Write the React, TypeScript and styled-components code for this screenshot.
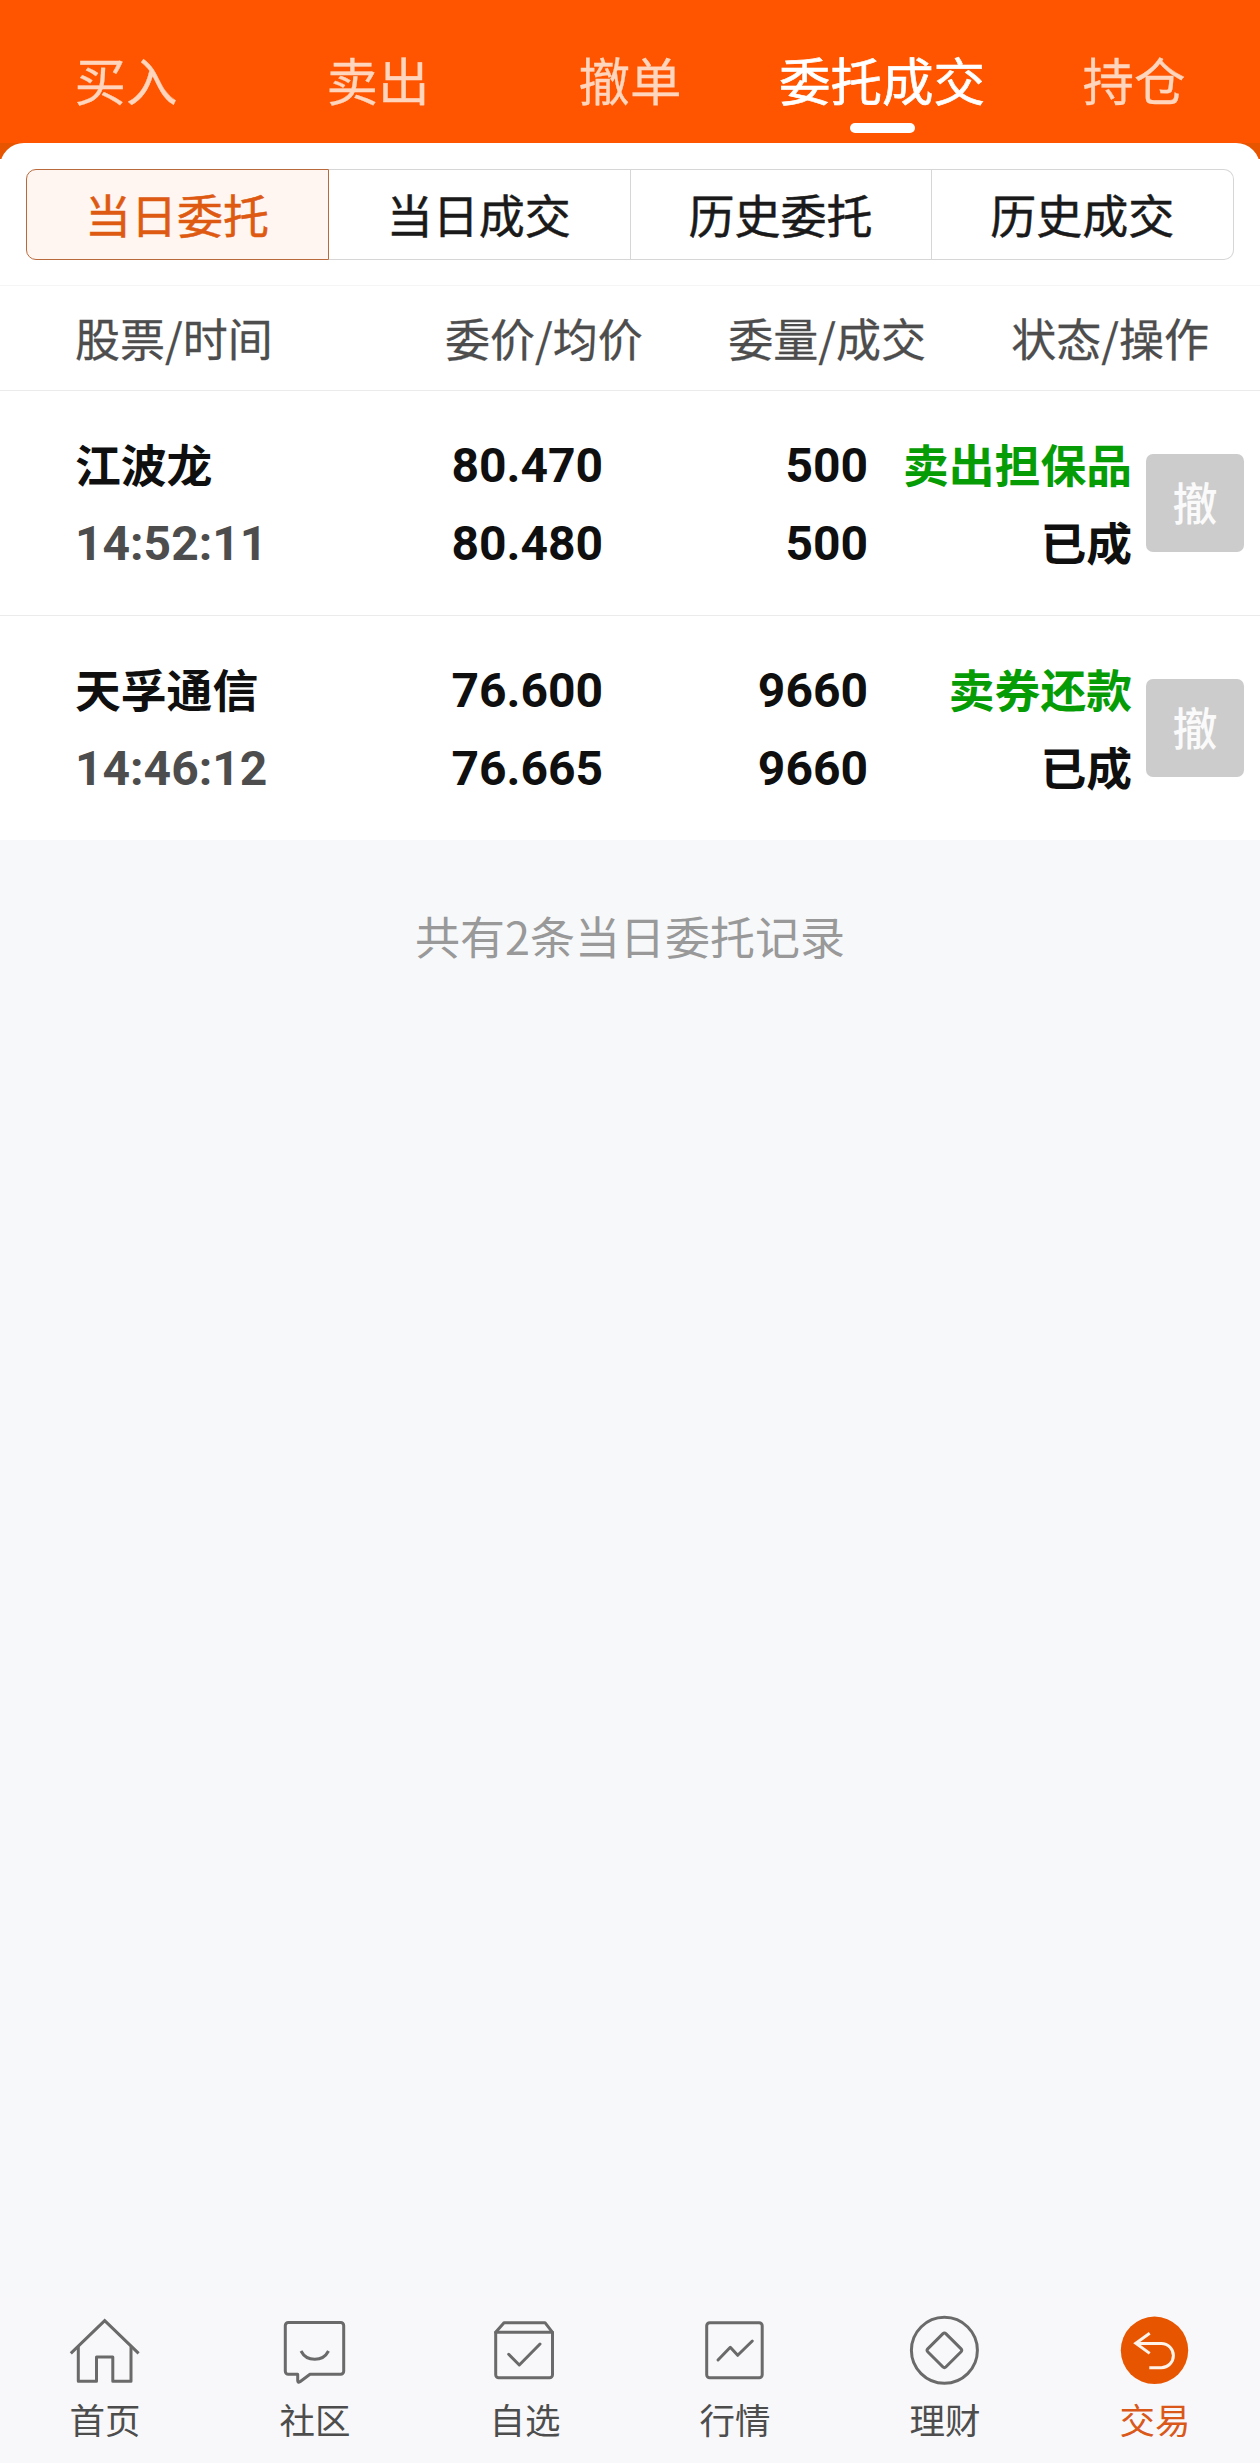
import React from 'react';
import styled, { createGlobalStyle } from 'styled-components';

const GlobalStyle = createGlobalStyle`
  * { box-sizing: border-box; }
  body {
    margin: 0;
    background: #f7f8fa;
    font-family: 'Noto Sans CJK SC', 'Noto Sans', sans-serif;
  }
`;

const Screen = styled.div`
  display: flex;
  flex-direction: column;
  width: 1260px;
  height: 2463px;
  background: #f7f8fa;
`;

const Header = styled.header`
  display: flex;
  height: 143px;
  background: #ff5500;
`;

const HeaderTab = styled.div<{ $active?: boolean }>`
  display: flex;
  flex-direction: column;
  align-items: center;
  width: 252px;
  padding-top: 41px;
  font-size: 51.5px;
  line-height: 76px;
  white-space: nowrap;
  color: ${(p) => (p.$active ? '#fff' : '#ffd6bd')};
  -webkit-text-stroke: ${(p) => (p.$active ? '0.7px' : '0.3px')} currentColor;
`;

const Indicator = styled.span`
  width: 65px;
  height: 10px;
  margin-top: 6px;
  border-radius: 5px;
  background: #fff;
`;

const PanelBackdrop = styled.div`
  background: linear-gradient(#e85500 16px, #fff 16px);
`;

const Panel = styled.section`
  height: 142px;
  padding: 26px 26px 0;
  border-radius: 24px 24px 0 0;
  background: #fff;
`;

const Segments = styled.div`
  display: flex;
  height: 91px;
`;

const Segment = styled.div<{ $active?: boolean }>`
  flex: 1;
  display: flex;
  align-items: center;
  justify-content: center;
  padding: 0 1px 4px 0;
  border: 1px solid ${(p) => (p.$active ? '#b96a3c' : '#d6d6d6')};
  border-left-width: ${(p) => (p.$active ? '1px' : '0')};
  background: ${(p) => (p.$active ? '#fff6f2' : '#fff')};
  color: ${(p) => (p.$active ? '#de5a12' : '#1a1a1a')};
  font-size: 46px;
  line-height: 60px;
  -webkit-text-stroke: 0.5px currentColor;
  &:first-child { border-radius: 10px 0 0 10px; }
  &:last-child { border-radius: 0 10px 10px 0; }
`;

const TableHead = styled.div`
  display: grid;
  grid-template-columns: 370px 197px 284px 283px;
  align-items: center;
  height: 106px;
  padding: 0 0 0 75px;
  border-top: 1px solid #f5f5f5;
  border-bottom: 1px solid #ebebeb;
  background: #fff;
  color: #4d4d4d;
  font-size: 45px;
  line-height: 60px;
  white-space: nowrap;
  -webkit-text-stroke: 0.3px currentColor;
`;

const HeadCell = styled.span<{ $end?: boolean }>`
  text-align: ${(p) => (p.$end ? 'right' : 'left')};
`;

const Order = styled.div`
  display: grid;
  grid-template-columns: 300px 228px 265px 264px 98px;
  height: 225px;
  padding: 33px 0 0 75px;
  border-bottom: 1px solid #ebebeb;
  background: #fff;
  &:last-of-type { border-bottom: 0; height: 224px; }
`;

const Stack = styled.div<{ $end?: boolean }>`
  display: flex;
  flex-direction: column;
  align-items: ${(p) => (p.$end ? 'flex-end' : 'flex-start')};
  color: #0f0f0f;
  font-weight: 700;
  font-size: 45.8px;
  line-height: 78px;
  white-space: nowrap;
`;

const Num = styled.span<{ $muted?: boolean }>`
  height: 78px;
  color: ${(p) => (p.$muted ? '#4d4d4d' : 'inherit')};
  font-family: Roboto, sans-serif;
  font-size: 48px;
  line-height: 84px;
`;

const Side = styled.span`
  color: #069c06;
`;

const CancelButton = styled.button`
  width: 98px;
  height: 98px;
  margin: 30px 0 0 14px;
  padding: 0 0 2px;
  border: 0;
  border-radius: 7px;
  background: #ccc;
  color: #fafafa;
  font: 500 45px/96px 'Noto Sans CJK SC', sans-serif;
`;

const Summary = styled.p`
  margin: 66px 0 0;
  text-align: center;
  color: #999;
  font-size: 45px;
  line-height: 60px;
`;

const BottomNav = styled.nav`
  display: flex;
  height: 166px;
  margin-top: auto;
  background: #f8f8fa;
`;

const NavItem = styled.div<{ $active?: boolean }>`
  display: flex;
  flex-direction: column;
  align-items: center;
  width: 210px;
  padding-top: 17px;
  color: ${(p) => (p.$active ? '#d9581a' : '#4d4d4d')};
  font-size: 35.5px;
  line-height: 52px;
  svg {
    display: block;
    width: 72px;
    height: 72px;
    margin-bottom: 7px;
    fill: none;
    stroke: #6a6a6a;
    stroke-width: 3;
    stroke-linecap: round;
    stroke-linejoin: round;
  }
`;

const icons: Record<string, React.ReactNode> = {
  home: (
    <>
      <path d="M1.8 39.4 35.7 6.6 69.6 39.4" strokeLinecap="butt" strokeLinejoin="miter" />
      <path d="M9.3 33.3V67.3H27.5V43H43.8V67.3H62V33.3" />
    </>
  ),
  chat: (
    <>
      <path d="M9.3 8.5H61.7a3 3 0 0 1 3 3V57.3a3 3 0 0 1-3 3H31L21 67.7Q18.7 69 18.7 66.5V60.3H9.3a3 3 0 0 1-3-3V11.5a3 3 0 0 1 3-3Z" />
      <path d="M22 37a15.5 15.5 0 0 0 27.5 0" strokeLinecap="butt" />
    </>
  ),
  box: (
    <>
      <path d="M6.7 18.3 15 8.7H56L63.5 18.3V60.7a3 3 0 0 1-3 3H9.7a3 3 0 0 1-3-3Z" />
      <path d="M6.7 18.3H63.5M19.7 40.3 30.3 51 51 30" />
    </>
  ),
  chart: (
    <>
      <rect x="7.7" y="8.7" width="55.5" height="55" rx="3" />
      <path d="M19 46 31.3 33.3 38.7 41.3 53.3 27" />
    </>
  ),
  coin: (
    <>
      <circle cx="35.4" cy="36.3" r="33" />
      <path d="M34 19.6Q35.4 18.2 36.8 19.6L52.1 34.9Q53.5 36.3 52.1 37.7L36.8 53Q35.4 54.4 34 53L18.7 37.7Q17.3 36.3 18.7 34.9Z" />
    </>
  ),
  trade: (
    <>
      <circle cx="35.5" cy="36.3" r="33.7" fill="#e85500" stroke="none" />
      <path
        d="M30.7 19.2 16.8 29.3 30.7 39.4M17 29.5H42.3a12.1 12.1 0 0 1 0 24.2H30.3"
        stroke="#fff3ea"
        strokeLinecap="butt"
        strokeLinejoin="miter"
      />
    </>
  ),
};

const tabs = ['买入', '卖出', '撤单', '委托成交', '持仓'];
const segments = ['当日委托', '当日成交', '历史委托', '历史成交'];
const orders = [
  { name: '江波龙', time: '14:52:11', price: '80.470', avg: '80.480', qty: '500', done: '500', side: '卖出担保品', status: '已成' },
  { name: '天孚通信', time: '14:46:12', price: '76.600', avg: '76.665', qty: '9660', done: '9660', side: '卖券还款', status: '已成' },
];
const nav = [
  ['home', '首页'],
  ['chat', '社区'],
  ['box', '自选'],
  ['chart', '行情'],
  ['coin', '理财'],
  ['trade', '交易'],
];

export default function App() {
  return (
    <Screen>
      <GlobalStyle />
      <Header>
        {tabs.map((t) => (
          <HeaderTab key={t} $active={t === '委托成交'}>
            {t}
            {t === '委托成交' && <Indicator />}
          </HeaderTab>
        ))}
      </Header>
      <PanelBackdrop>
        <Panel>
          <Segments>
            {segments.map((s, i) => (
              <Segment key={s} $active={i === 0}>{s}</Segment>
            ))}
          </Segments>
        </Panel>
      </PanelBackdrop>
      <TableHead>
        <HeadCell>股票/时间</HeadCell>
        <HeadCell $end>委价/均价</HeadCell>
        <HeadCell $end>委量/成交</HeadCell>
        <HeadCell $end>状态/操作</HeadCell>
      </TableHead>
      <div>
        {orders.map((o) => (
          <Order key={o.name}>
            <Stack>
              <span>{o.name}</span>
              <Num $muted>{o.time}</Num>
            </Stack>
            <Stack $end>
              <Num>{o.price}</Num>
              <Num>{o.avg}</Num>
            </Stack>
            <Stack $end>
              <Num>{o.qty}</Num>
              <Num>{o.done}</Num>
            </Stack>
            <Stack $end>
              <Side>{o.side}</Side>
              <span>{o.status}</span>
            </Stack>
            <CancelButton>撤</CancelButton>
          </Order>
        ))}
      </div>
      <Summary>共有2条当日委托记录</Summary>
      <BottomNav>
        {nav.map(([icon, label]) => (
          <NavItem key={icon} $active={icon === 'trade'}>
            <svg viewBox="0 0 72 72">{icons[icon]}</svg>
            {label}
          </NavItem>
        ))}
      </BottomNav>
    </Screen>
  );
}
